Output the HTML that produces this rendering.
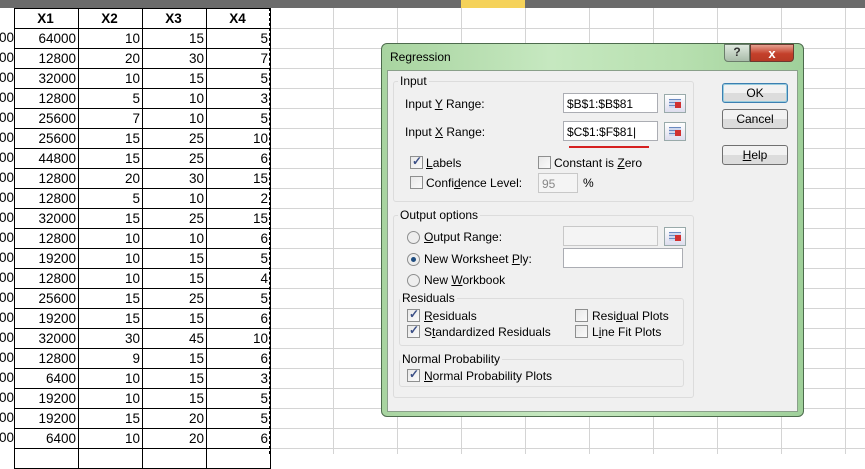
<!DOCTYPE html>
<html><head><meta charset="utf-8"><style>
*{box-sizing:border-box;margin:0;padding:0}
body{width:865px;height:454px;overflow:hidden;background:#fff;position:relative;font-family:"Liberation Sans",sans-serif;font-size:13px;color:#000}
.hdr{position:absolute;left:0;top:0;width:865px;height:8px;background:#6b6b6b}
.vl{position:absolute;top:8px;width:1px;height:446px;background:#d4d4d4}
.hl{position:absolute;left:269px;width:596px;height:1px;background:#d4d4d4}
table{position:absolute;left:14px;top:8px;border-collapse:collapse}
td{width:64px;height:20px;border:1px solid #000;text-align:right;padding-right:2px;font-size:13.5px;line-height:18px}
tr.h td{text-align:center;font-weight:bold}
.dash{position:absolute;top:8px;height:446px;width:0;border-left:1px dashed #000}
.dlg{position:absolute;left:381px;top:43px;width:423px;height:374px;border:1px solid #4d6b4d;border-radius:6px;background:linear-gradient(90deg,#a8d4a0,#c6e8c0 40%,#b8e0b0 70%,#9fd09a);}
.title{position:absolute;left:8px;top:6px;font-size:12px}
.inner{position:absolute;left:5px;top:26px;width:411px;height:342px;background:#f0f0f0;border:1px solid #8aa08a}
.grp{position:absolute;border:1px solid #dcdcdc;border-radius:3px}
.lbl{position:absolute;font-size:12px;white-space:nowrap}
.inp{position:absolute;background:#fff;border:1px solid #abadb3;height:20px;font-size:12px;padding:3px 0 0 3px}
.ref{position:absolute;width:22px;height:19px;border:1px solid #9aa;background:linear-gradient(#fff,#dde);}
.ref:after{content:"";position:absolute;left:4px;top:4px;width:12px;height:9px;background:repeating-linear-gradient(#6a8ac0 0 1px,#cfd8ee 1px 3px);}
.ref:before{content:"";position:absolute;left:10px;top:7px;width:6px;height:6px;background:#d03030;z-index:1}
.cb{position:absolute;width:13px;height:13px;border:1px solid #8e8f8f;background:linear-gradient(135deg,#e8e8e8,#fafafa)}
.cb.on:after{content:"✓";position:absolute;left:1px;top:-3px;font-size:12px;font-weight:bold;color:#3b4f86}
.rd{position:absolute;width:13px;height:13px;border:1px solid #8e8f8f;border-radius:50%;background:#eee}
.rd.on:after{content:"";position:absolute;left:3px;top:3px;width:5px;height:5px;border-radius:50%;background:#1f4d80}
.btn{position:absolute;width:66px;height:20px;border:1px solid #707070;border-radius:3px;background:linear-gradient(#f2f2f2 50%,#dcdcdc 50%);text-align:center;font-size:12px;line-height:18px}
u{text-decoration:underline}
</style></head><body>
<div class="hdr"></div>
<div style="position:absolute;left:461px;top:0;width:64px;height:8px;background:#f5d25a"></div>
<div class="vl" style="left:333px"></div><div class="vl" style="left:397px"></div><div class="vl" style="left:461px"></div><div class="vl" style="left:525px"></div><div class="vl" style="left:589px"></div><div class="vl" style="left:653px"></div><div class="vl" style="left:717px"></div><div class="vl" style="left:781px"></div><div class="vl" style="left:845px"></div>
<div class="hl" style="top:28px"></div><div class="hl" style="top:48px"></div><div class="hl" style="top:68px"></div><div class="hl" style="top:88px"></div><div class="hl" style="top:108px"></div><div class="hl" style="top:128px"></div><div class="hl" style="top:148px"></div><div class="hl" style="top:168px"></div><div class="hl" style="top:188px"></div><div class="hl" style="top:208px"></div><div class="hl" style="top:228px"></div><div class="hl" style="top:248px"></div><div class="hl" style="top:268px"></div><div class="hl" style="top:288px"></div><div class="hl" style="top:308px"></div><div class="hl" style="top:328px"></div><div class="hl" style="top:348px"></div><div class="hl" style="top:368px"></div><div class="hl" style="top:388px"></div><div class="hl" style="top:408px"></div><div class="hl" style="top:428px"></div><div class="hl" style="top:448px"></div>
<div style="position:absolute;left:0;top:28px;width:14px;font-size:13.5px;line-height:20px;overflow:hidden;text-align:right;direction:rtl">
00<br>00<br>00<br>00<br>00<br>00<br>00<br>00<br>00<br>00<br>00<br>00<br>00<br>00<br>00<br>00<br>00<br>00<br>00<br>00<br>00</div>
<table>
<tr class="h"><td>X1</td><td>X2</td><td>X3</td><td>X4</td></tr>
<tr><td>64000</td><td>10</td><td>15</td><td>5</td></tr>
<tr><td>12800</td><td>20</td><td>30</td><td>7</td></tr>
<tr><td>32000</td><td>10</td><td>15</td><td>5</td></tr>
<tr><td>12800</td><td>5</td><td>10</td><td>3</td></tr>
<tr><td>25600</td><td>7</td><td>10</td><td>5</td></tr>
<tr><td>25600</td><td>15</td><td>25</td><td>10</td></tr>
<tr><td>44800</td><td>15</td><td>25</td><td>6</td></tr>
<tr><td>12800</td><td>20</td><td>30</td><td>15</td></tr>
<tr><td>12800</td><td>5</td><td>10</td><td>2</td></tr>
<tr><td>32000</td><td>15</td><td>25</td><td>15</td></tr>
<tr><td>12800</td><td>10</td><td>10</td><td>6</td></tr>
<tr><td>19200</td><td>10</td><td>15</td><td>5</td></tr>
<tr><td>12800</td><td>10</td><td>15</td><td>4</td></tr>
<tr><td>25600</td><td>15</td><td>25</td><td>5</td></tr>
<tr><td>19200</td><td>15</td><td>15</td><td>6</td></tr>
<tr><td>32000</td><td>30</td><td>45</td><td>10</td></tr>
<tr><td>12800</td><td>9</td><td>15</td><td>6</td></tr>
<tr><td>6400</td><td>10</td><td>15</td><td>3</td></tr>
<tr><td>19200</td><td>10</td><td>15</td><td>5</td></tr>
<tr><td>19200</td><td>15</td><td>20</td><td>5</td></tr>
<tr><td>6400</td><td>10</td><td>20</td><td>6</td></tr>
<tr><td></td><td></td><td></td><td></td></tr>
</table>
<div class="dash" style="left:14px"></div><div class="dash" style="left:269px"></div>

<div class="dlg">
 <div class="title">Regression</div>
 <div style="position:absolute;left:342px;top:0;width:26px;height:18px;border:1px solid #6b7d6b;border-radius:0 0 0 4px;background:linear-gradient(#dfe9df,#a9bca9);text-align:center;font-size:12px;font-weight:bold;color:#333">?</div>
 <div style="position:absolute;left:368px;top:0;width:44px;height:18px;border:1px solid #6b3a30;border-radius:0 0 4px 0;background:linear-gradient(#e6a090,#c4402a 55%,#b73a25);text-align:center;font-size:13px;font-weight:bold;color:#fff;line-height:17px">x</div>
 <div class="inner">
  <div class="grp" style="left:5px;top:10px;width:301px;height:121px"></div>
  <div class="lbl" style="left:10px;top:3px;background:#f0f0f0;padding:0 2px">Input</div>
  <div class="lbl" style="left:17px;top:26px">Input <u>Y</u> Range:</div>
  <div class="inp" style="left:175px;top:22px;width:95px">$B$1:$B$81</div>
  <div class="ref" style="left:276px;top:23px"></div>
  <div class="lbl" style="left:17px;top:54px">Input <u>X</u> Range:</div>
  <div class="inp" style="left:175px;top:50px;width:95px">$C$1:$F$81|</div>
  <div class="ref" style="left:276px;top:51px"></div>
  <div style="position:absolute;left:181px;top:75px;width:80px;height:2px;background:#d62020"></div>
  <div class="cb on" style="left:22px;top:85px"></div><div class="lbl" style="left:38px;top:85px"><u>L</u>abels</div>
  <div class="cb" style="left:150px;top:85px"></div><div class="lbl" style="left:166px;top:85px">Constant is <u>Z</u>ero</div>
  <div class="cb" style="left:22px;top:105px"></div><div class="lbl" style="left:38px;top:105px">Confi<u>d</u>ence Level:</div>
  <div class="inp" style="left:150px;top:102px;width:40px;color:#888;border-color:#c8c8c8;background:#f4f4f4">95</div>
  <div class="lbl" style="left:195px;top:105px">%</div>

  <div class="grp" style="left:5px;top:144px;width:301px;height:183px"></div>
  <div class="lbl" style="left:10px;top:137px;background:#f0f0f0;padding:0 2px">Output options</div>
  <div class="rd" style="left:19px;top:160px"></div><div class="lbl" style="left:36px;top:159px"><u>O</u>utput Range:</div>
  <div class="inp" style="left:175px;top:155px;width:95px;background:#f4f4f4;border-color:#c8c8c8"></div><div class="ref" style="left:276px;top:156px"></div>
  <div class="rd on" style="left:19px;top:182px"></div><div class="lbl" style="left:36px;top:181px">New Worksheet <u>P</u>ly:</div>
  <div class="inp" style="left:175px;top:177px;width:120px"></div>
  <div class="rd" style="left:19px;top:203px"></div><div class="lbl" style="left:36px;top:202px">New <u>W</u>orkbook</div>
  <div class="grp" style="left:11px;top:227px;width:285px;height:48px"></div>
  <div class="lbl" style="left:12px;top:220px;background:#f0f0f0;padding:0 2px">Residuals</div>
  <div class="cb on" style="left:19px;top:238px"></div><div class="lbl" style="left:36px;top:238px"><u>R</u>esiduals</div>
  <div class="cb on" style="left:19px;top:254px"></div><div class="lbl" style="left:36px;top:254px">S<u>t</u>andardized Residuals</div>
  <div class="cb" style="left:187px;top:238px"></div><div class="lbl" style="left:204px;top:238px">Resi<u>d</u>ual Plots</div>
  <div class="cb" style="left:187px;top:254px"></div><div class="lbl" style="left:204px;top:254px">L<u>i</u>ne Fit Plots</div>
  <div class="grp" style="left:11px;top:288px;width:285px;height:28px"></div>
  <div class="lbl" style="left:12px;top:281px;background:#f0f0f0;padding:0 2px">Normal Probability</div>
  <div class="cb on" style="left:19px;top:298px"></div><div class="lbl" style="left:36px;top:298px"><u>N</u>ormal Probability Plots</div>

  <div class="btn" style="left:334px;top:12px;border-color:#3c7fb1;box-shadow:inset 0 0 0 1px #9cd">OK</div>
  <div class="btn" style="left:334px;top:38px">Cancel</div>
  <div class="btn" style="left:334px;top:74px"><u>H</u>elp</div>
 </div>
</div>
</body></html>
